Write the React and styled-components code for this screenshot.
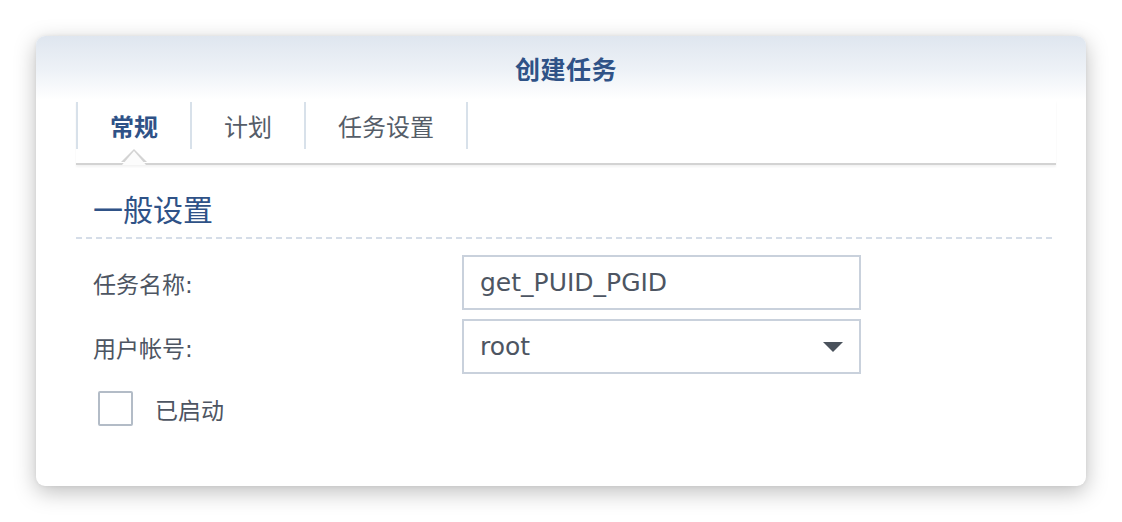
import React from 'react';
import styled, { createGlobalStyle } from 'styled-components';

/********************************************** Styles ********************************************/
const GlobalStyle = createGlobalStyle`
  html, body {
    margin: 0;
    padding: 0;
    background: #ffffff;
  }
  body {
    font-family: "DejaVu Sans", "Noto Sans CJK SC", sans-serif;
  }
`;

const Colors = {
  Blue: '#2f5287',
  Text: '#4d5562',
  TabText: '#555d68',
  Field: '#c9d1dc',
  Divider: '#d8e1ea',
};

const DivPage = styled.div`
  width: 1122px;
  height: 522px;
  padding: 36px;
  box-sizing: border-box;
`;

const DivWindow = styled.div`
  width: 1050px;
  height: 450px;
  background: #fff;
  border-radius: 9px;
  overflow: hidden;
  box-shadow: 0 6px 22px rgba(0, 0, 0, 0.26), 0 0 4px rgba(0, 0, 0, 0.06);
  display: flex;
  flex-direction: column;
`;

const DivHeader = styled.div`
  height: 64px;
  flex: none;
  display: flex;
  align-items: center;
  justify-content: center;
  padding-left: 10px;
  background: linear-gradient(180deg, #dfe6ef 0%, #eef2f7 55%, #ffffff 100%);
  color: ${Colors.Blue};
  font-size: 25px;
  font-weight: bold;
  letter-spacing: 0.5px;
`;

const DivTabBar = styled.div`
  display: flex;
  align-items: flex-start;
  margin: 0 30px 0 40px;
  height: 61px;
  padding-top: 2px;
  border-bottom: 2px solid #d3d3d3;
  box-shadow: 0 2px 2px rgba(0, 0, 0, 0.05);
  flex: none;
`;

const DivTab = styled.div`
  position: relative;
  height: 47px;
  padding: 0 ${p => p.$pad}px;
  display: flex;
  align-items: center;
  border-right: 2px solid ${Colors.Divider};
  border-left: ${p => (p.$first ? `2px solid ${Colors.Divider}` : 'none')};
  font-size: 24px;
  color: ${p => (p.$active ? Colors.Blue : Colors.TabText)};
  font-weight: ${p => (p.$active ? 'bold' : 'normal')};

  ${p => p.$active && `
    &::before {
      content: '';
      position: absolute;
      left: 50%;
      top: 47px;
      transform: translateX(-50%);
      border-left: 13px solid transparent;
      border-right: 13px solid transparent;
      border-bottom: 13px solid #d3d3d3;
    }
    &::after {
      content: '';
      position: absolute;
      left: 50%;
      top: 49px;
      transform: translateX(-50%);
      border-left: 12px solid transparent;
      border-right: 12px solid transparent;
      border-bottom: 14px solid #fcfcfc;
    }
  `}
`;

const DivBody = styled.div`
  margin: 0 30px 0 40px;
  display: flex;
  flex-direction: column;
`;

const H2Section = styled.h2`
  margin: 0;
  padding: 27px 17px 9px;
  font-size: 30px;
  line-height: 38px;
  font-weight: normal;
  color: ${Colors.Blue};
  background-image: linear-gradient(to right, #d5dde8 60%, transparent 0);
  background-size: 10px 2px;
  background-repeat: repeat-x;
  background-position: left bottom;
`;

const DivForm = styled.div`
  display: grid;
  grid-template-columns: 386px 399px;
  row-gap: 9px;
  margin-top: 16px;
`;

const LabelField = styled.label`
  display: flex;
  align-items: center;
  padding-left: 17px;
  font-size: 23px;
  color: ${Colors.Text};
`;

const DivInput = styled.div`
  height: 55px;
  box-sizing: border-box;
  border: 2px solid ${Colors.Field};
  display: flex;
  align-items: center;
  justify-content: space-between;
  padding: 0 16px;
  font-size: 25px;
  color: ${Colors.Text};
`;

const SvgArrow = styled.svg`
  width: 20px;
  height: 10px;
`;

const DivCheckRow = styled.div`
  display: flex;
  align-items: center;
  gap: 22px;
  margin-top: 17px;
  padding-left: 22px;
`;

const DivCheckbox = styled.div`
  width: 35px;
  height: 35px;
  box-sizing: border-box;
  border: 2px solid #b3bcc7;
  border-radius: 2px;
  background: #fff;
`;

const SpanCheckLabel = styled.span`
  font-size: 23px;
  color: ${Colors.Text};
`;

/********************************************* Component ******************************************/
const tabs = [
  { name: '常规', pad: 32, active: true },
  { name: '计划', pad: 32 },
  { name: '任务设置', pad: 32 },
];

const App = () => {
  return (
    <DivPage>
      <GlobalStyle />
      <DivWindow>
        <DivHeader>创建任务</DivHeader>
        <DivTabBar>
          {tabs.map((t, i) => (
            <DivTab key={t.name} $first={i === 0} $active={t.active} $pad={t.pad}>
              {t.name}
            </DivTab>
          ))}
        </DivTabBar>
        <DivBody>
          <H2Section>一般设置</H2Section>
          <DivForm>
            <LabelField>任务名称:</LabelField>
            <DivInput>get_PUID_PGID</DivInput>
            <LabelField>用户帐号:</LabelField>
            <DivInput>
              root
              <SvgArrow viewBox="0 0 20 10">
                <path d="M0 0 H20 L10 10 Z" fill="#4a525c" />
              </SvgArrow>
            </DivInput>
          </DivForm>
          <DivCheckRow>
            <DivCheckbox />
            <SpanCheckLabel>已启动</SpanCheckLabel>
          </DivCheckRow>
        </DivBody>
      </DivWindow>
    </DivPage>
  );
};

export default App;
